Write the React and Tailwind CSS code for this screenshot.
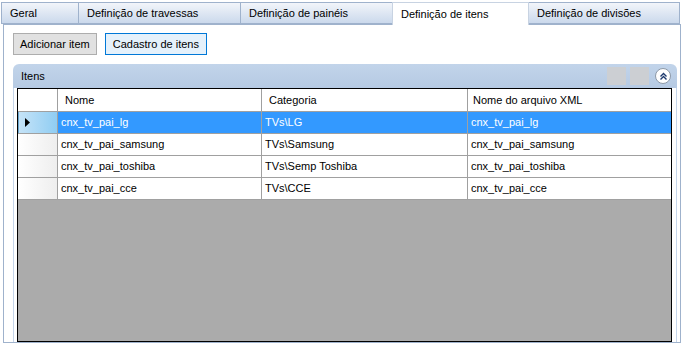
import React from 'react';

const tabs = [
  { label: 'Geral', w: 'w-[78px]' },
  { label: 'Definição de travessas', w: 'w-[163px]' },
  { label: 'Definição de painéis', w: 'w-[153px]' },
  { label: 'Definição de itens', w: 'w-[137px]', active: true },
  { label: 'Definição de divisões', w: 'w-[152px]' },
];

const rows = [
  { nome: 'cnx_tv_pai_lg', categoria: 'TVs\\LG', xml: 'cnx_tv_pai_lg' },
  { nome: 'cnx_tv_pai_samsung', categoria: 'TVs\\Samsung', xml: 'cnx_tv_pai_samsung' },
  { nome: 'cnx_tv_pai_toshiba', categoria: 'TVs\\Semp Toshiba', xml: 'cnx_tv_pai_toshiba' },
  { nome: 'cnx_tv_pai_cce', categoria: 'TVs\\CCE', xml: 'cnx_tv_pai_cce' },
];

const App = () => {
  return (
    <div
      className="w-[686px] h-[347px] bg-white text-[11px] text-black overflow-hidden"
      style={{ fontFamily: '"Liberation Sans", Arial, sans-serif' }}
    >
      {/* Tab strip */}
      <div className="flex pt-[2px] pl-[1px] h-[25px]">
        {tabs.map((t) =>
          t.active ? (
            <div
              key={t.label}
              className={`${t.w} h-[23px] bg-white border-t border-l border-r border-[#c8d3e2] pl-[8px] flex items-center relative z-10 -mr-px`}
            >
              {t.label}
            </div>
          ) : (
            <div
              key={t.label}
              className={`${t.w} h-[22px] bg-gradient-to-b from-[#f2f5fa] to-[#cbd9ec] border border-[#9fb2cc] pl-[8px] flex items-center -mr-px`}
            >
              {t.label}
            </div>
          )
        )}
      </div>

      {/* Tab page */}
      <div className="mx-[3px] -mt-px w-[678px] h-[319px] border border-[#9fb2cc] pt-[8px] pl-[9px] flex flex-col">
        <div className="flex gap-[8px]">
          <button className="h-[22px] px-[6px] bg-[#e1e1e1] border border-[#adadad] text-[11px]">
            Adicionar item
          </button>
          <button className="h-[22px] px-[7px] bg-[#e5f1fb] border border-[#0078d7] text-[11px]">
            Cadastro de itens
          </button>
        </div>

        {/* Itens panel */}
        <div className="mt-[9px] w-[664px] flex-1 flex flex-col">
          <div className="h-[24px] rounded-t-[6px] bg-gradient-to-b from-[#c2d4ea] to-[#b6cae3] flex items-center pl-[8px] pr-[6px]">
            <span className="flex-1">Itens</span>
            <div className="w-[19px] h-[18px] bg-[#cccfd3] mr-[4px]" />
            <div className="w-[19px] h-[18px] bg-[#cccfd3] mr-[6px]" />
            <div className="w-[16px] h-[16px] rounded-full bg-white border border-[#8d99a8] flex items-center justify-center">
              <svg width="9" height="9" viewBox="0 0 9 9">
                <path d="M1.5 4.5 L4.5 1.5 L7.5 4.5 M1.5 7.5 L4.5 4.5 L7.5 7.5" fill="none" stroke="#1e3a6e" strokeWidth="1.4" />
              </svg>
            </div>
          </div>
          <div className="flex-1 border-l border-r border-[#c5d5ea] pl-[3px] pr-[4px] flex flex-col">
            {/* Data grid */}
            <div className="flex-1 border border-black bg-[#ababab] flex flex-col">
              <div className="flex h-[23px] bg-white border-b border-[#a0a0a0]">
                <div className="w-[40px] border-r border-[#a0a0a0]" />
                <div className="w-[204px] border-r border-[#a0a0a0] pl-[7px] flex items-center">Nome</div>
                <div className="w-[206px] border-r border-[#a0a0a0] pl-[7px] flex items-center">Categoria</div>
                <div className="w-[203px] pl-[5px] flex items-center">Nome do arquivo XML</div>
              </div>
              {rows.map((r, i) => {
                const sel = i === 0;
                return (
                  <div key={r.nome} className="flex h-[22px] border-b border-[#a0a0a0]">
                    <div
                      className={`w-[40px] border-r border-[#a0a0a0] flex items-center pl-[6px] ${
                        sel ? 'bg-gradient-to-r from-[#c5e3f7] to-[#8fcdf3] border-l border-l-[#6aa6cf]' : 'bg-gradient-to-r from-white to-[#eeeeee]'
                      }`}
                    >
                      {sel && (
                        <svg width="5" height="9" viewBox="0 0 5 9">
                          <path d="M0 0 L5 4.5 L0 9 Z" fill="#000" />
                        </svg>
                      )}
                    </div>
                    <div className={`w-[204px] border-r border-[#a0a0a0] pl-[3px] flex items-center ${sel ? 'bg-[#3399ff] text-white' : 'bg-white'}`}>
                      {r.nome}
                    </div>
                    <div className={`w-[206px] border-r border-[#a0a0a0] pl-[3px] flex items-center ${sel ? 'bg-[#3399ff] text-white' : 'bg-white'}`}>
                      {r.categoria}
                    </div>
                    <div className={`w-[203px] pl-[3px] flex items-center ${sel ? 'bg-[#3399ff] text-white' : 'bg-white'}`}>
                      {r.xml}
                    </div>
                  </div>
                );
              })}
            </div>
          </div>
        </div>
      </div>
    </div>
  );
};

export default App;
